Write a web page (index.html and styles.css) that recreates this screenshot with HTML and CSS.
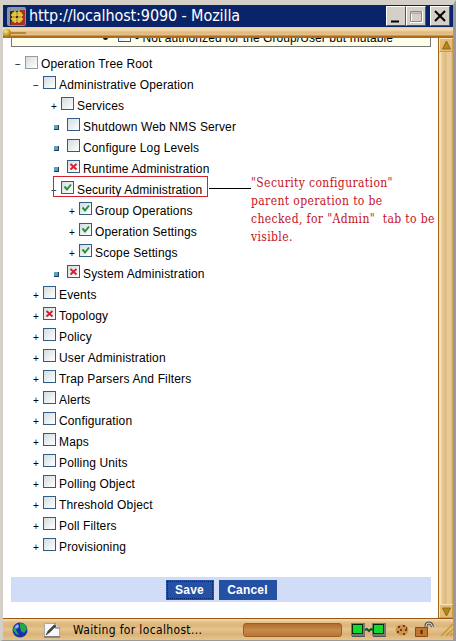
FILE: index.html
```
<!DOCTYPE html>
<html lang="en">
<head>
<meta charset="utf-8">
<title>http://localhost:9090 - Mozilla</title>
<link rel="stylesheet" href="styles.css">
</head>
<body>
<svg class="defs" width="0" height="0" aria-hidden="true">
  <defs>
    <g id="check"><path d="M3.500 5.500l2.500 3 4-5" fill="none" stroke="#27923b" stroke-width="2"/></g>
    <g id="cross"><path d="M3.500 4l6 5.500M9.500 4l-6 5.500" fill="none" stroke="#d8202c" stroke-width="1.900"/></g>
  </defs>
</svg>
<div class="window">
  <header class="titlebar">
    <svg class="app" width="19" height="19" viewBox="0 0 19 19"><rect width="19" height="19" rx="2" fill="#8795a5"/><path d="M3 4h14v14H3z" fill="#402b24"/><path d="M13 3h5v15H4v-4h9z" fill="#a73422"/><g stroke="#f1d541" stroke-width="1.400" fill="none"><rect x="6" y="6" width="8" height="8"/><path d="M8 4v12M12 4v12M4 8h12M4 12h12"/></g></svg>
    <span class="title">http://localhost:9090 - Mozilla</span>
    <span class="controls">
      <svg width="20" height="20"><path d="M4 15.500h8v-2H4z"/></svg>
      <svg width="20" height="20"><path d="M4 5h11v10H4z" fill="none" stroke="#fff" stroke-width="2"/><path d="M3.500 4.500h11v10h-11zM3 6h12" fill="none" stroke="#888"/></svg>
      <svg class="close" width="20" height="20"><path d="M4 4l10 10M14 4l-10 10" stroke="#000" stroke-width="2"/></svg>
    </span>
  </header>
  <div class="toolbar"><span class="knob"></span><span class="rod"></span></div>
  <div class="view">
    <main class="page">
      <div class="legend"><span class="dot"></span><i class="box"></i><span>- Not authorized for the Group/User but mutable</span></div>
      <div class="tree" id="tree"></div>
      <span class="highlight"></span>
      <span class="leader"></span>
      <p class="note"><span>"Security configuration"</span><span>parent operation to be</span><span>checked, for "Admin"&nbsp; tab to be</span><span>visible.</span></p>
      <div class="actions"><button class="save">Save</button><button>Cancel</button></div>
    </main>
    <div class="scroll">
      <svg width="14" height="14"><path d="M6.500 2l4 8h-8z" fill="#b78613" stroke="#8b681d"/></svg>
      <span class="track"></span>
      <svg width="14" height="14"><path d="M2.500 3h8l-4 8z" fill="#b78613" stroke="#8b681d"/></svg>
    </div>
  </div>
  <footer class="status">
    <svg class="globe" width="16" height="16"><circle cx="8" cy="8" r="7.500" fill="#1730b0"/><path d="M8 1l5 1 2 5-3 4-3-2-1-4zM2 5l3-1-1 4 3 5-3-1-3-4z" fill="#24a848"/><path d="M3 4l3-2 1 3-3 2z" fill="#9af"/></svg>
    <svg class="edit" width="18" height="16"><path d="M1.500 1.500h10l5 5v8h-15z" fill="#f7f7f7" stroke="#aaa"/><path d="M12 1v5h5" fill="#ccc" stroke="#777"/><path d="M3 13l2-4 6-6 2 1-6 6z" fill="#444" stroke="#222" stroke-width=".500"/><path d="M1 15h16" stroke="#555"/></svg>
    <span class="message">Waiting for localhost...</span>
    <span class="progress"></span>
    <svg class="net" width="36" height="16"><g id="pc"><path d="M0 1h14v13H0z" fill="#777"/><path d="M1 2h11v10H1z" fill="#032b08"/><path d="M2 3h9v8H2z" fill="#12d92d"/><path d="M1 14.500h13" stroke="#555"/></g><use href="#pc" x="21"/><path d="M14 8l2-1 2 2 2-2 2 1" stroke="#14551d" stroke-width="2" fill="none"/></svg>
    <svg class="cookie" width="16" height="14"><ellipse cx="7" cy="7" rx="6.500" ry="5.500" fill="#cf914e"/><path d="M3 4h2m3-1h2M5 7h2m3 0h2M2 9h2m4 2h2M11 5h1" stroke="#703d13" stroke-width="2"/></svg>
    <svg class="lock" width="20" height="17"><path d="M11 8V5q0-3 3-3t3.500 4" fill="none" stroke="#555" stroke-width="3"/><path d="M11 8V5q0-3 3-3t3.500 4" fill="none" stroke="#ddd"/><path d="M.500 6.500h12v9h-12z" fill="#c27731" stroke="#8c4b14"/><path d="M6.500 9v4" stroke="#4e290d" stroke-width="2"/></svg>
    <svg class="grip" width="12" height="15"><path d="M0 14L12 2M5 14l7-7M9 14l3-3" stroke="#c9982d" stroke-width="1.500"/></svg>
  </footer>
</div>
<script src="tree.js"></script>
</body>
</html>
```
FILE: styles.css
```
* { box-sizing: border-box; }
body { margin: 0; overflow: hidden; font-family: "Liberation Sans", Arial, sans-serif; }
.defs { position: absolute; }
.window { width: 456px; height: 641px; background: #fff; border: solid #d4d0c8; border-width: 5px 3px 1px; border-right-color: #999; border-bottom-color: #999; display: flex; flex-direction: column; }
.titlebar { height: 22px; flex: none; background: #0a246a; display: flex; align-items: center; padding-left: 4px; }
.title { color: #fff; font: 16px/22px "DejaVu Sans Condensed", sans-serif; letter-spacing: -.1px; margin-left: 3px; white-space: nowrap; width: 212px; }
.controls { display: flex; margin-left: 145px; }
.controls svg { background: #d4d0c8; border: 1px solid #fff; border-right-color: #555; border-bottom-color: #555; }
.controls .close { margin-left: 4px; }
.toolbar { height: 11px; flex: none; display: flex; align-items: center; background: linear-gradient(#d4d0c8 0 1px, #f2d9ab 1px 3px, #dfba80 5px, #e5c28b 8px, #b06a1d 9px); }
.knob { width: 8px; height: 8px; border-radius: 50%; background: radial-gradient(circle at 35% 30%, #ffe77c, #a87e12 70%); }
.rod { width: 15px; height: 2px; background: #b98638; }
.view { height: 580px; flex: none; display: flex; }
.page { width: 435px; height: 580px; overflow: hidden; padding-left: 8px; position: relative; }
.legend { display: flex; align-items: flex-start; width: 420px; height: 9px; background: #ffffe9; border: 1px solid #777; border-top: 0; overflow: hidden; font-size: 12px; line-height: 14px; padding-left: 91px; }
.legend span:last-child { margin: -7px 0 0 4px; letter-spacing: .08px; white-space: nowrap; }
.legend .dot { width: 5px; height: 5px; border-radius: 50%; margin: -3px 10px 0 0; background: #111; }
.legend .box { margin-top: -9px; }
.box { display: block; width: 13px; height: 13px; flex: none; border: 1px solid #315c85; background: linear-gradient(135deg, #d4dcdf, #fff); }
.tree { margin-top: 7px; height: 504px; }
.row { height: 21px; display: flex; align-items: flex-start; font-size: 12px; line-height: 15px; white-space: nowrap; }
.row .box { margin-top: 1px; }
.row .box svg { display: block; margin: -1px; }
.row.root .box { border-color: #999; margin-top: 2px; }
.label { margin: 3px 0 0 3px; letter-spacing: .14px; }
.mark { width: 10px; height: 15px; flex: none; margin-top: 3px; font-size: 10px; }
.bullet { width: 5px; height: 5px; margin: 8px 8px 0 0; background: #5c9fbe; border: solid #213c5c; border-width: 0 1px 1px 0; }
.highlight { position: absolute; left: 50px; top: 138px; width: 155px; height: 21px; border: 1px solid #d3222b; }
.leader { position: absolute; left: 206px; top: 150px; width: 42px; height: 1px; background: #000; }
.note { position: absolute; left: 248px; top: 136px; margin: 0; color: #c41226; font: 12px/18px "DejaVu Serif Condensed", "DejaVu Serif", serif; letter-spacing: .38px; white-space: nowrap; }
.note span { display: block; }
.actions { width: 420px; height: 25px; margin-top: 19px; background: #d1ddf7; display: flex; justify-content: center; align-items: center; gap: 5px; }
button { height: 20px; width: 58px; padding: 0; border: 0; background: #2451a4; color: #fff; font: bold 12px "Liberation Sans", sans-serif; letter-spacing: .2px; }
.save { width: 48px; outline: 1px dotted #0a246a; outline-offset: -2px; }
.scroll { width: 15px; background: linear-gradient(90deg, #a56414 1px, #f6e2b8 1px 3px, #e6c48e 4px 6px, #dbb57d 7px, #e8c894 9px 13px, #c99b4b); display: flex; flex-direction: column; align-items: flex-end; }
.scroll svg { background: #e4bc75; border: 1px solid #c99b4b; border-top-color: #f8e4b8; border-left-color: #f8e4b8; }
.track { flex: 1; }
.status { flex: 1; display: flex; align-items: center; padding-top: 1px; background: linear-gradient(#9b5713 0 1px, #f3d8a8 1px 2px, #e3bf87 4px, #dcb579 8px, #e6c590 11px, #d9b277 16px, #e7c58e); }
.status svg, .progress { flex: none; }
.status .globe { margin-left: 9px; }
.status .edit { margin-left: 15px; }
.message { margin-left: 12px; width: 170px; font: 12px "DejaVu Sans Condensed", sans-serif; letter-spacing: .35px; white-space: nowrap; }
.progress { width: 99px; height: 14px; border: 1px solid #a35e1c; border-radius: 3px; background: linear-gradient(#b06c2c, #c78b4c 50%, #b97536); }
.net { margin-left: 9px; }
.cookie { margin-left: 8px; }
.lock { margin-left: 4px; }
.grip { margin-left: 6px; }
```
FILE: tree.js
```
const rows = [
  [0, '−', '', 'Operation Tree Root'], [1, '−', '', 'Administrative Operation'], [2, '+', '', 'Services'],
  [2, '', '', 'Shutdown Web NMS Server'], [2, '', '', 'Configure Log Levels'], [2, '', 'cross', 'Runtime Administration'],
  [2, '−', 'check', 'Security Administration'], [3, '+', 'check', 'Group Operations'], [3, '+', 'check', 'Operation Settings'],
  [3, '+', 'check', 'Scope Settings'], [2, '', 'cross', 'System Administration'], [1, '+', '', 'Events'],
  [1, '+', 'cross', 'Topology'], [1, '+', '', 'Policy'], [1, '+', '', 'User Administration'], [1, '+', '', 'Trap Parsers And Filters'],
  [1, '+', '', 'Alerts'], [1, '+', '', 'Configuration'], [1, '+', '', 'Maps'], [1, '+', '', 'Polling Units'],
  [1, '+', '', 'Polling Object'], [1, '+', '', 'Threshold Object'], [1, '+', '', 'Poll Filters'], [1, '+', '', 'Provisioning']
];
document.getElementById('tree').innerHTML = rows.map(([depth, mark, state, name]) =>
  `<div class="row ${depth ? '' : 'root'}" style="padding-left:${4 + depth * 18 + (mark ? 0 : 3)}px">` +
  (mark ? `<span class="mark">${mark}</span>` : '<span class="bullet"></span>') +
  `<i class="box">${state ? `<svg width="13" height="13"><use href="#${state}"/></svg>` : ''}</i><span class="label">${name}</span></div>`).join('');
```
